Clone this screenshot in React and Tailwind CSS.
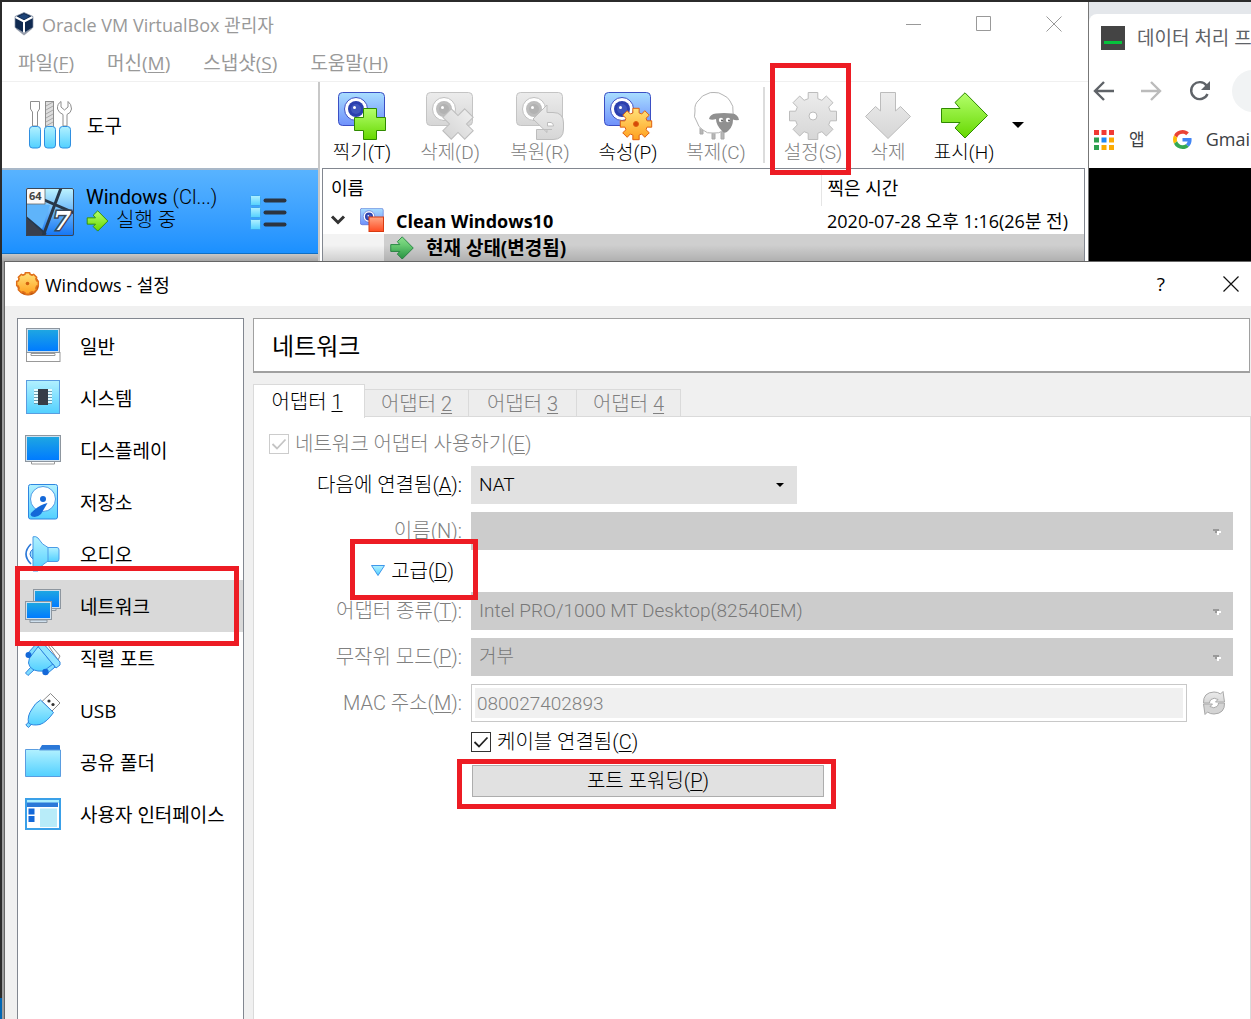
import React from "react";

const RED = "pointer-events-none absolute z-20 border-[5px] border-[#ed1c24]";
const UI = "font-['Open_Sans','Noto_Sans_CJK_KR',sans-serif] font-normal";
const THIN = "font-['Roboto','Noto_Sans_CJK_KR',sans-serif] font-light";

function gear(cx, cy, ro, ri) {
  const pts = [];
  for (let i = 0; i < 8; i++) {
    const a = (i * Math.PI) / 4;
    [
      [ri, -0.27],
      [ro, -0.2],
      [ro, 0.2],
      [ri, 0.27],
    ].forEach(([r, d]) => pts.push(`${(cx + r * Math.cos(a + d)).toFixed(1)},${(cy + r * Math.sin(a + d)).toFixed(1)}`));
  }
  return pts.join(" ");
}

function Defs() {
  const list = [
    ["gBlue", "#a9deff", "#6f90fb"],
    ["gGray", "#ececec", "#d6d6d6"],
    ["gGreen", "#b4ff6c", "#66d800"],
    ["gLeaf", "#8adf8a", "#2fa84c"],
    ["gOrange", "#ffe27a", "#ffa01e"],
    ["gRed", "#ffa684", "#ff4c22"],
    ["gCyan", "#b2f1ff", "#52d0ff"],
    ["gScreen", "#1ea6e2", "#007bff"],
    ["gWin", "#bff4ff", "#1274f5"],
  ];
  return (
    <svg width="0" height="0" className="absolute" aria-hidden="true">
      <defs>
        {list.map(([id, a, b]) => (
          <linearGradient key={id} id={id} x1="0" y1="0" x2="0" y2="1">
            <stop offset="0" stopColor={a} />
            <stop offset="1" stopColor={b} />
          </linearGradient>
        ))}
      </defs>
    </svg>
  );
}

function Svg({ w, h, children, className = "" }) {
  return (
    <svg width={w} height={h} viewBox={`0 0 ${w} ${h}`} className={`shrink-0 overflow-visible ${className}`} aria-hidden="true">
      {children}
    </svg>
  );
}

function Camera({ gray }) {
  return (
    <g>
      <rect x="0.5" y="0.5" width="46" height="33" rx="4" fill={gray ? "url(#gGray)" : "url(#gBlue)"} stroke={gray ? "#c4c4c4" : "#3b4fc4"} />
      <circle cx="18" cy="17" r="11.5" fill="#fff" stroke={gray ? "#c0c0c0" : "#3b4fc4"} />
      <circle cx="18" cy="17" r="8" fill={gray ? "#bdbdbd" : "#2b3fae"} />
      <circle cx="18" cy="17" r="5" fill={gray ? "#b2b2b2" : "#3f56bd"} />
      <circle cx="16.5" cy="15.5" r="1.5" fill="#fff" />
    </g>
  );
}

const PLUS = "M25.5 16.5H38.5V25.5H47.5V38.5H38.5V47.5H25.5V38.5H16.5V25.5H25.5Z";

const TakeIcon = () => (
  <Svg w={48} h={48}>
    <Camera />
    <path d={PLUS} fill="url(#gGreen)" stroke="#2f8a00" />
  </Svg>
);
const DeleteSnapIcon = () => (
  <Svg w={48} h={48}>
    <Camera gray />
    <path d="M26 16.5H38V26H47.5V38H38V47.5H26V38H16.5V26H26Z" transform="rotate(45 32 32)" fill="url(#gGray)" stroke="#bdbdbd" />
  </Svg>
);
const RestoreIcon = () => (
  <Svg w={48} h={48}>
    <Camera gray />
    <path
      d="M17 27L31 13V20.500H37Q47.500 20.500 47.500 31V37Q47.500 47.500 37 47.500H20.500V37.500H31V40.500Z"
      fill="url(#gGray)"
      stroke="#bdbdbd"
    />
    <path d="M31.500 30.500H35Q37.500 31 37.500 34H31.500Z" fill="#fff" stroke="#bdbdbd" />
    <path d="M31 37.500H36" stroke="#bdbdbd" />
  </Svg>
);
const PropsIcon = () => (
  <Svg w={48} h={48}>
    <Camera />
    <polygon points={gear(32, 32, 16, 11.5)} fill="url(#gOrange)" stroke="#e0600e" strokeLinejoin="round" />
    <circle cx="32" cy="32" r="2.500" fill="#d4480a" stroke="#e0600e" />
  </Svg>
);
const SheepIcon = () => (
  <Svg w={44} h={48}>
    <path d="M6 36V42H9V38M18 40V47H21V40M27 40V47H30V38" fill="#b8b8b8" stroke="#a8a8a8" />
    <path
      d="M20 .5Q25 0 29 3Q34 5 36 9Q40 14 39 20Q41 26 37 30Q35 36 30 38Q25 42 19 41Q13 42 9 38Q4 35 3 30Q-1 25 1 19Q0 12 5 8Q8 3 13 2Q16 0 20 .5Z"
      fill="#fff"
      stroke="#b4b4b4"
    />
    <path d="M15 27Q16 22 22 21.500Q30 20.500 38 21.500Q44 22 45 28Q41 28.500 39 27.500Q39 34 35 38Q31 43 28 39Q22 33 22 27Q18 28.500 15 27Z" fill="#909090" />
    <circle cx="27" cy="28" r="2.200" fill="#fff" />
    <circle cx="34" cy="28" r="2.200" fill="#fff" />
    <circle cx="28" cy="28.500" r="1" fill="#555" />
    <circle cx="35" cy="28.500" r="1" fill="#555" />
  </Svg>
);
const GrayGear = () => (
  <Svg w={48} h={48}>
    <polygon points={gear(24, 24, 24, 18)} fill="url(#gGray)" stroke="#bcbcbc" strokeLinejoin="round" />
    <circle cx="24" cy="24" r="4" fill="#fff" stroke="#bcbcbc" />
  </Svg>
);
const DownIcon = () => (
  <Svg w={46} h={48}>
    <path d="M15.500 .5H30.500V19L35.500 14.500L45.500 24.500L23 46.500L.5 24.500L10.500 14.500L15.500 19Z" fill="url(#gGray)" stroke="#bcbcbc" />
  </Svg>
);
const ARROW = "M.5 16.500H19L14 10.500L24 .8L46.500 23.500L24 46L14 36L19 30.500H.5Z";
const ShowIcon = () => (
  <Svg w={47} h={48}>
    <path d={ARROW} fill="url(#gGreen)" stroke="#2f8a00" />
  </Svg>
);

const VBoxLogo = () => (
  <Svg w={20} h={24}>
    <path d="M2 17L10 23.500L18 17V13H2Z" fill="#9aa0ad" />
    <path d="M10 .5L19 4.500V15.500L10 21L1 15.500V4.500Z" fill="#0f2950" stroke="#8893a6" strokeWidth=".7" />
    <path d="M1.500 5L10 9.500L18.500 5M10 9.500V20.500" fill="none" stroke="#fff" strokeWidth="2" />
    <path d="M10 2L15.500 4.600L10 7.500L4.500 4.600Z" fill="#1d4377" />
  </Svg>
);

const ToolsIcon = () => (
  <Svg w={44} h={49}>
    <g fill="#fff" stroke="#8e8e8e">
      <path d="M2.500 .5H11.500V8L9.500 11V25H4.500V11L2.500 8Z" />
      <rect x="17.500" y=".5" width="8" height="25" fill="#ddd" />
      <path d="M33 .5Q29 3 29.500 8Q31 12 35 13.500V25H39V13.500Q43 12 43.500 8Q43.500 3 40 .5V6L36.500 9L33 6Z" />
    </g>
    <path d="M18 5L25 1M18 9L25 5M18 13L25 9M18 17L25 13M18 21L25 17M18 25L25 21" stroke="#999" strokeWidth=".8" />
    {[1, 16, 31].map((x) => (
      <rect key={x} x={x + 0.5} y="25.500" width="11" height="21.500" rx="3" fill="url(#gCyan)" stroke="#2f8fe0" />
    ))}
  </Svg>
);

const WinIcon = () => (
  <svg width="48" height="48" viewBox="0 0 48 48" className="shrink-0" aria-hidden="true">
    <rect width="48" height="48" rx="1.500" fill="url(#gWin)" />
    <path d="M0 16L24 17L16 41L0 28Z" fill="#5fb4fa" />
    <path d="M0 30L18 45L22 48H0Z" fill="#393f4d" />
    <path d="M16 11L48 25M35 0L17 48" stroke="#28384a" strokeWidth="3" />
    <path d="M0 29L20 46" stroke="#28384a" strokeWidth="2" />
    <rect x="0" y="0" width="19" height="16" fill="#fafafa" stroke="#555" strokeWidth=".7" />
    <text x="3" y="12" fontFamily="Open Sans" fontWeight="700" fontSize="11" fill="#444">64</text>
    <text x="27" y="42" fontFamily="DejaVu Serif" fontWeight="700" fontStyle="italic" fontSize="26" fill="#fff" stroke="#3a4656" strokeWidth="3" paintOrder="stroke">7</text>
    <rect x=".5" y=".5" width="47" height="47" rx="1.500" fill="none" stroke="#3a4656" />
  </svg>
);

const Monitor = ({ x = 0, y = 0, w = 35, h = 26 }) => (
  <g>
    <rect x={x + 0.5} y={y + 0.5} width={w} height={h} fill="#cfe0ee" stroke="#8d969f" />
    <rect x={x + 2} y={y + 2} width={w - 3} height={h - 3} fill="url(#gScreen)" />
  </g>
);

const icons = {
  general: (
    <Svg w={36} h={36}>
      <rect x="1.500" y="24.500" width="33.500" height="9" fill="#fff" stroke="#999" />
      <Monitor x={1} y={0} w={33} h={24} />
      <path d="M6 25.500H30V27.500H6Z" fill="#fff" stroke="#999" />
    </Svg>
  ),
  system: (
    <Svg w={36} h={36}>
      <rect x="1.500" y=".5" width="33" height="33" fill="url(#gCyan)" stroke="#5a9de0" />
      <path d="M9 10H27M9 13H27M9 16H27M9 19H27M9 22H27" stroke="#e8fbff" strokeWidth="2" />
      <path d="M9 11.500H27M9 14.500H27M9 17.500H27M9 20.500H27M9 23.500H27" stroke="#5f7f90" strokeWidth=".7" />
      <rect x="13" y="9" width="10" height="16" fill="#363c47" />
    </Svg>
  ),
  display: (
    <Svg w={36} h={36}>
      <path d="M6.500 29H29.500V32H6.500Z" fill="#fff" stroke="#999" />
      <Monitor x={0} y={3} w={35} h={26} />
    </Svg>
  ),
  storage: (
    <Svg w={36} h={36}>
      <rect x="3.500" y=".5" width="29" height="34.500" rx="2" fill="url(#gCyan)" stroke="#2f86e0" />
      <circle cx="18" cy="15" r="12.500" fill="#fff" stroke="#4f9ce6" />
      <circle cx="18" cy="15" r="3" fill="#1468d8" />
      <path d="M22.500 19L16 30Q12 34 7 32.500Q4.500 31 6.500 28.500Q14 21 22.500 19Z" fill="#1468d8" />
    </Svg>
  ),
  audio: (
    <Svg w={36} h={36}>
      <path d="M6 8Q-4 18 6 28" fill="none" stroke="#2b78d8" strokeWidth="1.600" />
      <path d="M8 13Q2 18 8 23Z" fill="#9adfff" stroke="#2b78d8" />
      <path d="M22 11.500H32Q34 11.500 34 14V23Q34 25.500 32 25.500H22Z" fill="url(#gCyan)" stroke="#4a9be6" />
      <path d="M8 .8Q11 0 13 2Q17 9 23 11.500V25Q17 28 13 35H8Z" fill="url(#gCyan)" stroke="#4a9be6" />
    </Svg>
  ),
  network: (
    <Svg w={36} h={36}>
      <path d="M26 20H31V22.500H26Z" fill="#cfe0ee" stroke="#8d969f" />
      <Monitor x={8} y={1} w={27} h={19} />
      <path d="M5 32H22V34.500H5Z" fill="#cfe0ee" stroke="#8d969f" />
      <Monitor x={0} y={13} w={26} h={18} />
    </Svg>
  ),
  serial: (
    <Svg w={36} h={36}>
      <path d="M22 3.500L25 4.500L35 16L33 20Z" fill="#fff" stroke="#888" />
      <path d="M.5 33L3 35.500L9 30L6 27Z" fill="#7fdcff" stroke="#2f86e0" />
      <path d="M5 15L13 6L30 27Q24 32 13 31Q5 30 3.500 23Z" fill="url(#gCyan)" stroke="#2f86e0" />
      <path d="M11 4L16 1L35 22V25L31 28Z" fill="#8fe4ff" stroke="#2f86e0" />
      <path d="M3 13L12 3L14 5.500L6 16Z" fill="#7fdcff" stroke="#2f86e0" />
      <path d="M20 30L28 24L30 27L23 33Z" fill="#7fdcff" stroke="#2f86e0" />
      <circle cx="3.500" cy="15" r="3" fill="#1468d8" />
      <circle cx="20.500" cy="32" r="3.200" fill="#1468d8" />
    </Svg>
  ),
  usb: (
    <Svg w={36} h={36}>
      <path d="M17 9.500L25.500 1.500L35 11L27 19Z" fill="#fff" stroke="#8a8a8a" />
      <circle cx="24" cy="9" r="1.600" fill="#333" />
      <circle cx="28" cy="12.500" r="1.600" fill="#333" />
      <path d="M.8 33L5 28.500L8 30.500L3.500 35.500Z" fill="#7fdcff" stroke="#2f86e0" />
      <path d="M15.500 8L28.500 20.500Q22 30 15 32.500Q7 34 3.500 31Q2 24 7 17Q10 11 15.500 8Z" fill="url(#gCyan)" stroke="#2f86e0" />
    </Svg>
  ),
  folder: (
    <Svg w={36} h={36}>
      <path d="M14 6L17 1H34Q35 1 35 2V8H13Z" fill="#2b78d8" />
      <path d="M.5 5.500H13.500L15 6H35.500V32.500H.5Z" fill="url(#gCyan)" stroke="#5a9de0" />
    </Svg>
  ),
  ui: (
    <Svg w={36} h={36}>
      <rect x="1" y="3" width="34" height="30" fill="#fff" stroke="#3aa0e8" strokeWidth="2" />
      <rect x="2" y="4" width="32" height="3" fill="#a9eeff" />
      <rect x="2" y="6.500" width="31" height="4.500" fill="#2b78d8" />
      <rect x="3.500" y="12.500" width="6" height="6" fill="#1468d8" />
      <rect x="3.500" y="20" width="6" height="6" fill="#1468d8" />
      <rect x="15" y="12.500" width="17" height="18.500" fill="#b8ecf9" />
    </Svg>
  ),
};

const OrangeGear = () => (
  <Svg w={24} h={24}>
    <circle cx="12" cy="12.500" r="11" fill="#c05a10" />
    <polygon points={gear(11.5, 11.5, 11, 9.5)} fill="url(#gOrange)" stroke="#e0701a" strokeLinejoin="round" strokeWidth="1.500" />
    <circle cx="11.500" cy="11.500" r="1.800" fill="#d0600e" />
  </Svg>
);

const Menu = ({ t, k }) => (
  <button type="button" className="whitespace-nowrap">
    {t}(<u className="underline-offset-2">{k}</u>)
  </button>
);

const Tool = ({ icon, label, on, w = "w-[84px]", children }) => (
  <button type="button" className={`relative flex flex-col items-center ${w} ${on ? "text-black" : "text-[#808080]"}`}>
    {icon}
    <span className="mt-px whitespace-nowrap leading-6">{label}</span>
    {children}
  </button>
);

function Manager() {
  return (
    <section className={`min-w-0 flex-1 bg-white text-[19px] ${UI}`}>
      <header className="flex h-11 items-center pl-3 text-[18px] text-[#999]">
        <VBoxLogo />
        <h1 className="ml-2 flex-1 whitespace-nowrap pt-0.5">Oracle VM VirtualBox 관리자</h1>
        <div className="flex items-center gap-[54px] pr-[26px] text-[#999]">
          <button type="button" aria-label="최소화"><Svg w={16} h={16}><path d="M0 8.500H15" stroke="currentColor" /></Svg></button>
          <button type="button" aria-label="최대화"><Svg w={16} h={16}><path d="M.5 .5H14.500V14.500H.5Z" fill="none" stroke="currentColor" /></Svg></button>
          <button type="button" aria-label="닫기"><Svg w={16} h={16}><path d="M.5 .5L15.500 15.500M15.500 .5L.5 15.500" stroke="currentColor" /></Svg></button>
        </div>
      </header>
      <nav className="flex h-9 items-center gap-[33px] border-b border-[#f0f0f0] pl-4 text-[#999]">
        <Menu t="파일" k="F" />
        <Menu t="머신" k="M" />
        <Menu t="스냅샷" k="S" />
        <Menu t="도움말" k="H" />
      </nav>
      <div className="flex">
        <aside className="w-[318px] shrink-0 border-r-2 border-[#c8c8c8]">
          <button type="button" className={`flex h-[86px] w-full items-center pl-[26px] text-black ${THIN}`}>
            <ToolsIcon />
            <span className="ml-[15px] pt-1 font-normal">도구</span>
          </button>
          <div className={`flex h-[86px] items-start border-b border-t-2 border-b-[#0f6fc4] border-t-[#a9b8c8] bg-gradient-to-b from-[#58b3ff] to-[#1a90ff] pl-6 text-[20px] text-black ${THIN}`}>
            <div className="mt-[18px]"><WinIcon /></div>
            <div className="ml-3 mt-4 w-[164px] leading-[23px]">
              <div className="whitespace-nowrap"><span className="font-normal">Windows</span> (Cl...)</div>
              <div className="flex items-center gap-[7px]">
                <svg width="23" height="22" viewBox="-1 -1 49 49" aria-hidden="true"><path d={ARROW} fill="url(#gGreen)" stroke="#2f8a00" strokeWidth="2" /></svg>
                <span>실행 중</span>
              </div>
            </div>
            <button type="button" aria-label="보기 목록" className="mt-[25px]">
              <Svg w={36} h={36}>
                {[0, 12, 24].map((y) => (
                  <g key={y}>
                    <rect x=".5" y={y + 0.5} width="10" height="10" rx="1" fill="url(#gCyan)" stroke="#3ba3ee" />
                    <path d={`M15.500 ${y + 5.5}H34.500`} stroke="#2c3440" strokeWidth="4" strokeLinecap="round" />
                  </g>
                ))}
              </Svg>
            </button>
          </div>
          <div className="h-[7px] bg-gradient-to-b from-[#c8c8c8] to-[#a4a4a4]" />
        </aside>
        <div className="min-w-0 flex-1">
          <div className={`flex h-[86px] items-start pt-[10px] ${THIN}`}>
            <Tool icon={<TakeIcon />} label="찍기(T)" on />
            <Tool w="ml-1 w-[84px]" icon={<DeleteSnapIcon />} label="삭제(D)" />
            <Tool w="ml-[6px] w-[84px]" icon={<RestoreIcon />} label="복원(R)" />
            <Tool w="ml-1 w-[84px]" icon={<PropsIcon />} label="속성(P)" on />
            <Tool w="ml-1 w-[84px]" icon={<SheepIcon />} label="복제(C)" />
            <div className="-mt-[5px] ml-[5px] mr-[6px] h-[76px] w-[2px] bg-[#dcdcdc]" />
            <Tool icon={<GrayGear />} label="설정(S)">
              <span className={`${RED} -left-px -top-[29px] h-[112px] w-[81px]`} />
            </Tool>
            <Tool w="w-[66px]" icon={<DownIcon />} label="삭제" />
            <Tool w="w-[86px]" icon={<ShowIcon />} label="표시(H)" on />
            <button type="button" aria-label="표시 옵션" className="mt-[30px] pl-[5px]">
              <Svg w={12} h={6}><path d="M0 0H12L6 6Z" /></Svg>
            </button>
          </div>
          <div className="relative ml-0.5 mr-[3px] border-l border-r border-t border-[#828790]">
            <table className="w-full table-fixed border-collapse text-[18px] text-black">
              <thead>
                <tr className="h-[37px] text-left">
                  <th className="pl-2 pt-0.5 font-normal">이름</th>
                  <th className="w-[263px] border-l border-[#e5e5e5] pl-[6px] pt-0.5 font-normal">찍은 시간</th>
                </tr>
              </thead>
              <tbody>
                <tr className="h-7">
                  <td className="p-0">
                    <div className="flex items-center pl-2">
                      <Svg w={14} h={10}><path d="M1 1.500L7 7.500L13 1.500" fill="none" stroke="#333" strokeWidth="3" /></Svg>
                      <svg className="ml-[15px]" width="24" height="24" viewBox="0 0 48 48" aria-hidden="true">
                        <Camera />
                        <rect x="18" y="18" width="29" height="29" fill="url(#gRed)" stroke="#d83a10" strokeWidth="2" />
                      </svg>
                      <span className="ml-3 pt-0.5 font-bold leading-[26px]">Clean Windows10</span>
                    </div>
                  </td>
                  <td className="whitespace-nowrap p-0 pl-[6px] pt-0.5 leading-[26px]">2020-07-28 오후 1:16(26분 전)</td>
                </tr>
                <tr className="h-[27px]">
                  <td className="bg-[#f3f3f3] p-0 pl-[61px]">
                    <div className="flex h-[27px] items-center bg-[#cfcfcf] pl-[6px]">
                      <svg width="24" height="24" viewBox="-1 -1 49 49" aria-hidden="true"><path d={ARROW} fill="url(#gLeaf)" stroke="#2a8a46" strokeWidth="2" /></svg>
                      <span className="ml-3 whitespace-nowrap pt-0.5 text-[19px] font-bold leading-[25px]">현재 상태(변경됨)</span>
                    </div>
                  </td>
                  <td className="bg-[#cfcfcf] p-0" />
                </tr>
              </tbody>
            </table>
            <div className="pointer-events-none absolute inset-x-0 bottom-0 h-4 bg-gradient-to-b from-transparent to-black/15" />
          </div>
        </div>
      </div>
    </section>
  );
}

function Browser() {
  return (
    <section className={`flex w-[163px] shrink-0 flex-col overflow-hidden border-l border-[#777] bg-[#e4e7eb] pt-3 ${UI}`}>
      <div className="flex h-12 items-center rounded-tl-lg bg-white pl-3 text-[19px] text-[#5f6368]">
        <span className="flex h-6 w-6 shrink-0 flex-col justify-end bg-[#444] px-[3px] pb-[6px]"><span className="h-[3px] bg-[#06c23c]" /></span>
        <span className="ml-3 whitespace-nowrap">데이터 처리 프</span>
      </div>
      <div className="flex h-[60px] items-center bg-white pb-0.5 pl-1 text-[#5f6368]">
        <button type="button" aria-label="뒤로"><Svg w={22} h={20}><path d="M21 10H2M11 1L2 10L11 19" fill="none" stroke="currentColor" strokeWidth="2.400" /></Svg></button>
        <button type="button" aria-label="앞으로" className="ml-[26px] text-[#bbb]"><Svg w={22} h={20}><path d="M0 10H19M10 1L19 10L10 19" fill="none" stroke="currentColor" strokeWidth="2.400" /></Svg></button>
        <button type="button" aria-label="새로고침" className="ml-[26px]">
          <Svg w={22} h={20}><path d="M17.500 4.500A8.500 8.500 0 1 0 18.500 13" fill="none" stroke="currentColor" strokeWidth="2.400" /><path d="M21 0V9H12Z" fill="currentColor" /></Svg>
        </button>
        <div className="ml-[21px] h-[42px] w-20 shrink-0 rounded-full bg-[#f1f3f4]" />
      </div>
      <div className="flex h-[46px] items-center bg-white pb-[11px] pl-[5px] text-[17px] text-[#3c4043]">
        <Svg w={20} h={20}>
          {["#f03a34", "#f03a34", "#f03a34", "#2ca04f", "#1f88f5", "#fbab04", "#2ca04f", "#fbab04", "#fbab04"].map((c, i) => (
            <rect key={i} x={(i % 3) * 7.5} y={Math.floor(i / 3) * 7.5} width="5" height="5" fill={c} />
          ))}
        </Svg>
        <a href="#apps" className="ml-[15px]">앱</a>
        <svg className="ml-7 shrink-0" width="19" height="19" viewBox="0 0 48 48" aria-hidden="true">
          <path fill="#EA4335" d="M24 9.500c3.540 0 6.710 1.220 9.210 3.600l6.850-6.850C35.900 2.380 30.470 0 24 0 14.620 0 6.510 5.380 2.560 13.220l7.980 6.190C12.430 13.720 17.740 9.500 24 9.500z" />
          <path fill="#4285F4" d="M46.980 24.550c0-1.570-.15-3.090-.38-4.550H24v9.020h12.940c-.58 2.960-2.260 5.480-4.780 7.180l7.730 6c4.510-4.180 7.090-10.360 7.090-17.650z" />
          <path fill="#FBBC05" d="M10.530 28.590c-.48-1.450-.76-2.990-.76-4.590s.27-3.140.76-4.590l-7.980-6.190C.92 16.460 0 20.120 0 24c0 3.880.92 7.540 2.560 10.780l7.970-6.190z" />
          <path fill="#34A853" d="M24 48c6.480 0 11.930-2.130 15.890-5.810l-7.730-6c-2.150 1.450-4.920 2.300-8.160 2.300-6.260 0-11.570-4.220-13.470-9.910l-7.980 6.190C6.510 42.620 14.620 48 24 48z" />
        </svg>
        <a href="#gmail" className="ml-[14px] text-[18px]">Gmail</a>
      </div>
      <div className="flex-1 bg-black" />
    </section>
  );
}

const pages = [
  ["general", "일반"],
  ["system", "시스템"],
  ["display", "디스플레이"],
  ["storage", "저장소"],
  ["audio", "오디오"],
  ["network", "네트워크"],
  ["serial", "직렬 포트"],
  ["usb", "USB"],
  ["folder", "공유 폴더"],
  ["ui", "사용자 인터페이스"],
];

const U = ({ children }) => <u className="decoration-1 underline-offset-2">{children}</u>;

function Label({ id, t, k, on }) {
  return (
    <label htmlFor={id} className={`justify-self-end whitespace-nowrap ${on ? "text-black" : "text-[#808080]"}`}>
      {t}(<U>{k}</U>):
    </label>
  );
}

function Select({ id, value, on }) {
  return (
    <div className={`relative text-[19px] ${on ? "w-[326px] max-w-full" : "w-full"}`}>
      <select
        id={id}
        disabled={!on}
        className={`block h-[38px] w-full appearance-none rounded-none pl-2 pr-8 opacity-100 ${on ? "bg-[#e1e1e1] text-black" : "bg-[#ccc] text-[#787878]"}`}
      >
        <option>{value}</option>
      </select>
      <span className={`pointer-events-none absolute top-[17px] ${on ? "right-[13px]" : "right-3"}`}>
        <Svg w={8} h={6}>
          {on ? (
            <path d="M0 0H8L4 4Z" />
          ) : (
            <g>
              <path d="M4 2H8V4H6V6H4Z" fill="#fff" />
              <path d="M0 0H6V2H4V4H2V2H0Z" fill="#999" />
            </g>
          )}
        </Svg>
      </span>
    </div>
  );
}

function Tick({ id, on, children }) {
  return (
    <label htmlFor={id} className={`flex h-6 items-center whitespace-nowrap ${on ? "text-black" : "text-[#808080]"}`}>
      <span className="relative mr-[6px] h-5 w-5">
        <input
          id={id}
          type="checkbox"
          defaultChecked
          disabled={!on}
          className={`block h-5 w-5 appearance-none border ${on ? "border-[#333]" : "border-[#ccc]"} bg-white`}
        />
        <span className="pointer-events-none absolute left-0 top-0">
          <Svg w={20} h={20}><path d="M3.500 10L8 14.500L16.500 5.500" fill="none" stroke={on ? "#222" : "#c4c4c4"} strokeWidth="1.800" /></Svg>
        </span>
      </span>
      <span>{children}</span>
    </label>
  );
}

function Settings() {
  return (
    <section className={`flex flex-1 flex-col border-l border-t border-[#666] bg-[#f0f0f0] text-black ${UI}`}>
      <header className="flex h-11 items-center bg-white pl-[11px] pr-3">
        <OrangeGear />
        <h2 className="ml-[5px] flex-1 pt-0.5 text-[18px]">Windows - 설정</h2>
        <button type="button" aria-label="도움말" className="mr-[58px] text-[19px]">?</button>
        <button type="button" aria-label="닫기"><Svg w={16} h={16}><path d="M.5 .5L15.500 15.500M15.500 .5L.5 15.500" stroke="#111" strokeWidth="1.200" /></Svg></button>
      </header>
      <div className="flex flex-1 pl-3 pt-3">
        <nav className="w-[227px] shrink-0 border-l border-r border-t border-[#828790] bg-white pt-px text-[19px]">
          {pages.map(([k, t]) => (
            <a key={k} href={`#${k}`} className={`relative flex h-[52px] items-center pl-[7px] ${k === "network" ? "bg-[#d9d9d9]" : ""}`}>
              {icons[k]}
              <span className="ml-[19px] whitespace-nowrap pt-0.5">{t}</span>
              {k === "network" && <span className={`${RED} -left-[3px] -top-[14px] h-20 w-[224px]`} />}
            </a>
          ))}
        </nav>
        <div className="ml-[9px] flex min-w-0 flex-1 flex-col">
          <div className="mr-px border border-b-2 border-[#a0a0a0] bg-white">
            <h3 className={`pl-[18px] pt-1 text-[24px] leading-[48px] ${THIN}`}><span className="font-normal">네트워크</span></h3>
          </div>
          <div role="tablist" className={`mt-[11px] flex items-end text-[20px] ${THIN}`}>
            <button type="button" role="tab" aria-selected="true" className="relative z-10 -mb-px h-[34px] w-[112px] border border-b-0 border-[#dadada] bg-white pr-1 leading-8">
              어댑터 <U>1</U>
            </button>
            {[2, 3, 4].map((n) => (
              <button key={n} type="button" role="tab" aria-selected="false" className={`h-7 border border-b-0 border-l-0 border-[#dadada] bg-[#ededed] leading-[26px] text-[#808080] ${n === 3 ? "w-[108px]" : "w-[104px]"}`}>
                어댑터 <U>{n}</U>
              </button>
            ))}
          </div>
          <div className={`-mt-px flex-1 border border-b-0 border-[#dadada] bg-white pl-[15px] pr-[17px] pt-[15px] text-[20px] ${THIN}`}>
            <Tick id="use">네트워크 어댑터 사용하기(<U>E</U>)</Tick>
            <div className="mt-[10px] grid grid-cols-[193px_minmax(0,1fr)] items-center gap-x-[9px] gap-y-2">
              <Label id="attached" t="다음에 연결됨" k="A" on />
              <Select id="attached" value="NAT" on />
              <Label id="name" t="이름" k="N" />
              <Select id="name" value="" />
              <button type="button" className="relative flex h-[26px] items-center gap-[6px] justify-self-end pr-2">
                <Svg w={14} h={12}><path d="M.5 .5H13.500L7 10.500Z" fill="url(#gCyan)" stroke="#3f97ea" /></Svg>
                <span className="whitespace-nowrap">고급(<U>D</U>)</span>
                <span className={`${RED} -right-4 -top-[19px] h-[61px] w-[128px]`} />
              </button>
              <span />
              <Label id="type" t="어댑터 종류" k="T" />
              <Select id="type" value="Intel PRO/1000 MT Desktop(82540EM)" />
              <Label id="mode" t="무작위 모드" k="P" />
              <Select id="mode" value="거부" />
              <Label id="mac" t="MAC 주소" k="M" />
              <div className="flex items-center gap-4">
                <div className="min-w-0 flex-1 border border-[#c8c8c8] p-[3px]">
                  <input id="mac" disabled defaultValue="080027402893" className="block h-[30px] w-full bg-[#f0f0f0] pl-0.5 text-[19px] text-[#808080]" />
                </div>
                <button type="button" disabled aria-label="새 MAC 주소 만들기" className="mr-2">
                  <Svg w={22} h={24}>
                    <path d="M.5 12Q0 1.500 11 1Q15 1 17.500 3L20 .5L21.500 11H12.500L15 8.500Q11 6 8 8.500Q6.500 10 6.500 12Z" fill="url(#gGray)" stroke="#a8a8a8" />
                    <path d="M21.500 12Q22 22.500 11 23Q7 23 4.500 21L2 23.500L.5 13H9.500L7 15.500Q11 18 14 15.500Q15.500 14 15.500 12Z" fill="#d4d4d4" stroke="#a8a8a8" />
                  </Svg>
                </button>
              </div>
              <span />
              <Tick id="cable" on>케이블 연결됨(<U>C</U>)</Tick>
              <span />
              <button type="button" className="relative ml-px mt-[3px] h-8 w-[352px] max-w-full border border-[#adadad] bg-[#e1e1e1] leading-[30px]">
                포트 포워딩(<U>P</U>)
                <span className={`${RED} -left-4 -top-[7px] h-[50px] w-[379px]`} />
              </button>
            </div>
          </div>
        </div>
      </div>
    </section>
  );
}

export default function App() {
  return (
    <div className="flex min-h-screen flex-col overflow-hidden bg-[#9c9c9c]">
      <Defs />
      <div className="flex border-l-2 border-t-2 border-[#2b2b2b]">
        <Manager />
        <Browser />
      </div>
      <div className="flex flex-1">
        <div className="mr-0.5 flex w-0.5 flex-col justify-end bg-[#2b2b2b]">
          <div className="h-[21px] bg-[#0067b5]" />
        </div>
        <Settings />
      </div>
    </div>
  );
}
